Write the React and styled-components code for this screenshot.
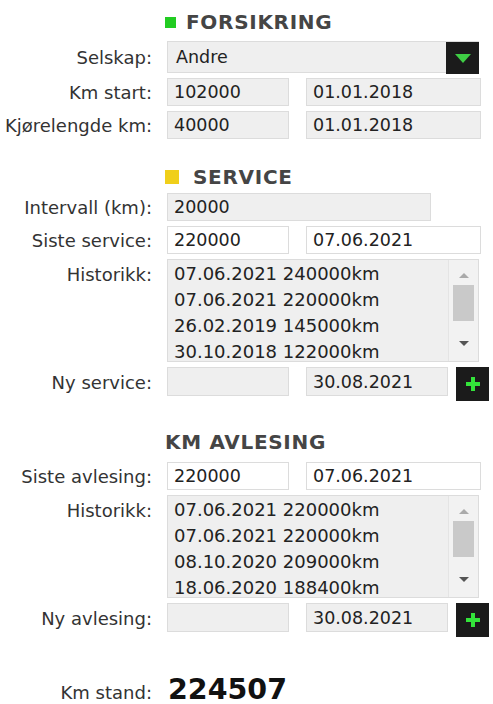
import React from "react";
import styled, { createGlobalStyle } from "styled-components";

const GlobalStyle = createGlobalStyle`
  body {
    margin: 0;
    background: #ffffff;
    font-family: "DejaVu Sans", Verdana, sans-serif;
    color: #333;
  }
`;

const Page = styled.div`
  width: 493px;
  padding-top: 10px;
`;

const Section = styled.div`
  display: flex;
  flex-direction: column;
  gap: 5px;
  margin-top: ${(p) => p.$top || 0}px;
`;

const Header = styled.div`
  display: flex;
  align-items: center;
  margin-left: 165px;
  margin-bottom: ${(p) => p.$bottom || 2}px;
  height: 24px;
  font-size: 20px;
  letter-spacing: 0.7px;
  font-weight: bold;
  color: #454545;
`;

const Square = styled.span`
  display: inline-block;
  width: ${(p) => p.$size}px;
  height: ${(p) => p.$size}px;
  background: ${(p) => p.$color};
  margin-right: ${(p) => p.$gap}px;
`;

const Row = styled.div`
  display: grid;
  grid-template-columns: 152px 1fr;
  column-gap: 15px;
  align-items: ${(p) => (p.$top ? "start" : "center")};
`;

const Label = styled.div`
  text-align: right;
  font-size: 18px;
  color: #333;
  white-space: nowrap;
  padding-top: ${(p) => (p.$top ? "5px" : "0")};
`;

const Fields = styled.div`
  display: flex;
  align-items: flex-start;
  gap: ${(p) => p.$gap ?? 17}px;
`;

const Input = styled.div`
  box-sizing: border-box;
  width: ${(p) => p.$w}px;
  height: ${(p) => p.$h || 28}px;
  padding-left: 6px;
  display: flex;
  align-items: center;
  font-size: 17.5px;
  color: #222;
  background: ${(p) => (p.$white ? "#ffffff" : "#efefef")};
  border: 1px solid #dcdcdc;
`;

const Select = styled.div`
  box-sizing: border-box;
  width: 312px;
  height: 32px;
  display: flex;
  align-items: stretch;
  background: #efefef;
  border: 1px solid #dcdcdc;
  border-right: none;
  font-size: 17.5px;
  color: #222;
`;

const SelectText = styled.div`
  flex: 1;
  display: flex;
  align-items: center;
  padding-left: 8px;
`;

const DarkButton = styled.div`
  width: ${(p) => p.$w || 33}px;
  height: ${(p) => p.$h || 34}px;
  margin: ${(p) => p.$m || "0"};
  background: #1b1b1b;
  display: flex;
  align-items: center;
  justify-content: center;
  flex-shrink: 0;
`;

const List = styled.div`
  box-sizing: border-box;
  width: 312px;
  height: 103px;
  display: flex;
  background: #efefef;
  border: 1px solid #dcdcdc;
  overflow: hidden;
`;

const Items = styled.div`
  flex: 1;
  padding: 1px 0 0 6px;
`;

const Item = styled.div`
  height: 26px;
  line-height: 26px;
  font-size: 18px;
  color: #222;
  white-space: nowrap;
`;

const Scrollbar = styled.div`
  width: 29px;
  display: flex;
  flex-direction: column;
  align-items: center;
  background: #f2f2f2;
  border-left: 1px solid #e4e4e4;
  padding-top: 13px;
`;

const Arrow = styled.div`
  width: 0;
  height: 0;
  border-left: 5px solid transparent;
  border-right: 5px solid transparent;
  ${(p) =>
    p.$down
      ? `border-top: 5px solid #555;`
      : `border-bottom: 5px solid #aaa;`}
`;

const Thumb = styled.div`
  width: 21px;
  height: 36px;
  margin: 7px 0 20px;
  background: #c9c9c9;
`;

const TotalRow = styled(Row)`
  margin-top: 42px;
  align-items: baseline;
  line-height: 22px;
`;

const Total = styled.div`
  font-size: 28.5px;
  line-height: 22px;
  font-weight: bold;
  color: #111;
  padding-left: 1px;
`;

function Plus() {
  return (
    <svg width="16" height="16" viewBox="0 0 16 16">
      <path d="M6 1h4v5h5v4h-5v5H6v-5H1V6h5z" fill="#33e43a" />
    </svg>
  );
}

function Caret() {
  return (
    <svg width="16" height="9" viewBox="0 0 16 9">
      <path d="M0 0h16L8 9z" fill="#3fce45" />
    </svg>
  );
}

function HistoryList({ rows }) {
  return (
    <List>
      <Items>
        {rows.map((r, i) => (
          <Item key={i}>{r}</Item>
        ))}
      </Items>
      <Scrollbar>
        <Arrow />
        <Thumb />
        <Arrow $down />
      </Scrollbar>
    </List>
  );
}

export default function App() {
  return (
    <Page>
      <GlobalStyle />
      <Section>
        <Header $bottom={2}>
          <Square $size={11} $color="#22cc22" $gap={10} />
          FORSIKRING
        </Header>
        <Row>
          <Label>Selskap:</Label>
          <Fields $gap={0}>
            <Select>
              <SelectText>Andre</SelectText>
              <DarkButton $w={33} $h={32}>
                <Caret />
              </DarkButton>
            </Select>
          </Fields>
        </Row>
        <Row>
          <Label>Km start:</Label>
          <Fields>
            <Input $w={122}>102000</Input>
            <Input $w={175}>01.01.2018</Input>
          </Fields>
        </Row>
        <Row>
          <Label>Kjørelengde km:</Label>
          <Fields>
            <Input $w={122}>40000</Input>
            <Input $w={175}>01.01.2018</Input>
          </Fields>
        </Row>
      </Section>

      <Section $top={26}>
        <Header $bottom={-1}>
          <Square $size={14} $color="#f0cf1a" $gap={14} />
          SERVICE
        </Header>
        <Row>
          <Label>Intervall (km):</Label>
          <Fields>
            <Input $w={264}>20000</Input>
          </Fields>
        </Row>
        <Row>
          <Label>Siste service:</Label>
          <Fields>
            <Input $w={122} $white>220000</Input>
            <Input $w={175} $white>07.06.2021</Input>
          </Fields>
        </Row>
        <Row $top>
          <Label $top>Historikk:</Label>
          <HistoryList
            rows={[
              "07.06.2021 240000km",
              "07.06.2021 220000km",
              "26.02.2019 145000km",
              "30.10.2018 122000km",
            ]}
          />
        </Row>
        <Row $top>
          <Label $top>Ny service:</Label>
          <Fields>
            <Input $w={122} $h={29}></Input>
            <Input $w={142} $h={29}>30.08.2021</Input>
            <DarkButton $m="0 0 0 -9px">
              <Plus />
            </DarkButton>
          </Fields>
        </Row>
      </Section>

      <Section $top={29}>
        <Header $bottom={3}>KM AVLESING</Header>
        <Row>
          <Label>Siste avlesing:</Label>
          <Fields>
            <Input $w={122} $white>220000</Input>
            <Input $w={175} $white>07.06.2021</Input>
          </Fields>
        </Row>
        <Row $top>
          <Label $top>Historikk:</Label>
          <HistoryList
            rows={[
              "07.06.2021 220000km",
              "07.06.2021 220000km",
              "08.10.2020 209000km",
              "18.06.2020 188400km",
            ]}
          />
        </Row>
        <Row $top>
          <Label $top>Ny avlesing:</Label>
          <Fields>
            <Input $w={122} $h={29}></Input>
            <Input $w={142} $h={29}>30.08.2021</Input>
            <DarkButton $m="0 0 0 -9px">
              <Plus />
            </DarkButton>
          </Fields>
        </Row>
      </Section>

      <TotalRow>
        <Label>Km stand:</Label>
        <Total>224507</Total>
      </TotalRow>
    </Page>
  );
}
